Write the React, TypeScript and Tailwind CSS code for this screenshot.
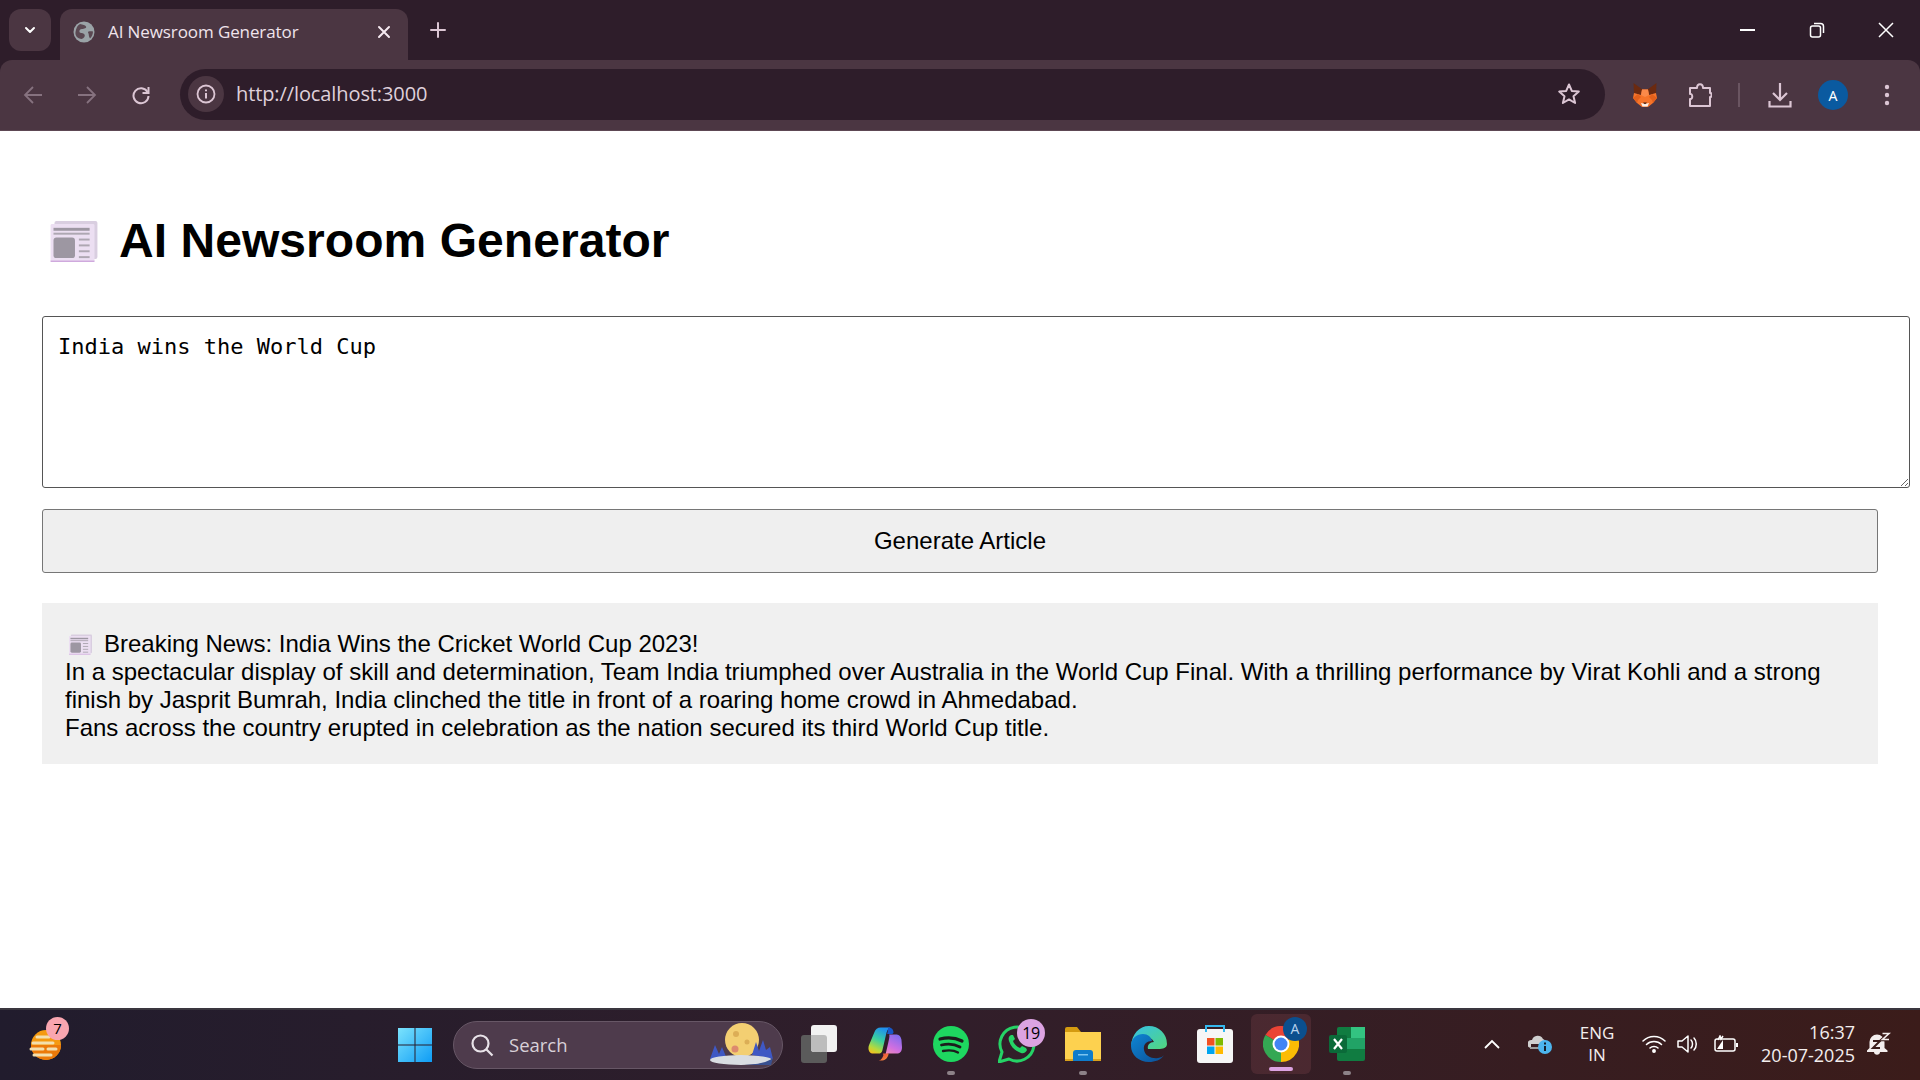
import React from "react";

const UI = "font-['Open_Sans','Noto_Sans',sans-serif]";
const ink = "#dcc6d4";
const dim = "#86727f";

function NewsEmoji({ className }: { className: string }) {
  return (
    <svg viewBox="0 0 48 42" className={className}>
      <rect x="4" y="0" width="44" height="39" rx="2" fill="#d9cee0" />
      <rect x="0" y="3" width="45" height="39" rx="1.5" fill="#ecdff2" />
      <rect x="0" y="40.5" width="45" height="1.5" fill="#cfa9dd" />
      <rect x="3" y="7" width="37" height="3" fill="#9d97a2" />
      <rect x="3" y="12" width="37" height="2" fill="#aea7b2" />
      <rect x="3" y="17" width="22" height="21" rx="3" fill="#9d97a2" />
      <rect x="29" y="18" width="11" height="2" fill="#aea7b2" />
      <rect x="29" y="24" width="11" height="2" fill="#aea7b2" />
      <rect x="29" y="30" width="11" height="2" fill="#aea7b2" />
      <rect x="29" y="36" width="11" height="2" fill="#aea7b2" />
    </svg>
  );
}

function Box({ w, children }: { w: string; children?: React.ReactNode }) {
  return <div className={`${w} h-full flex items-center justify-center shrink-0`}>{children}</div>;
}

function TabBar() {
  return (
    <div className="h-[60px] bg-[#2e1d2a] flex items-end shrink-0">
      <div className="w-[9px]" />
      <div className="w-[42px] h-[42px] mb-[9px] rounded-[12px] bg-[#4b3642] flex items-center justify-center">
        <svg viewBox="0 0 16 16" className="w-[16px] h-[16px]" fill="none" stroke="#fff" strokeWidth="2" strokeLinecap="round" strokeLinejoin="round"><path d="M4 6l4 4 4-4" /></svg>
      </div>
      <div className="w-[9px]" />
      <div className={`w-[348px] h-[51px] bg-[#4b3642] rounded-t-[12px] flex items-center pb-[6px] ${UI}`}>
        <div className="w-[48px] flex justify-center">
          <svg viewBox="0 0 22 22" className="w-[22px] h-[22px]">
            <circle cx="11" cy="11" r="10.500" fill="#9aa3a7" />
            <path d="M7 3c3 1 5 1 6 2.500s-2 2.500-4 2.500-3 1.500-2.500 3 4 .5 5 2.500-1 3.500-2.500 4.500C4 17.500 2 14.500 2.500 11S4.500 4 7 3zM15.500 10.500c1.500-.5 3-.5 4.500 0 0 2.500-1 5-3 7-1.500-2-1-4-1.500-5s-.8-1.500 0-2z" fill="#5a4852" />
          </svg>
        </div>
        <span className="text-[17px] text-[#f0e4ec] w-[269px] whitespace-nowrap leading-none tracking-[-0.100px]">AI Newsroom Generator</span>
        <svg viewBox="0 0 14 14" className="w-[14px] h-[14px]" fill="none" stroke="#f5e9f0" strokeWidth="2" strokeLinecap="round"><path d="M2 2l10 10M12 2L2 12" /></svg>
      </div>
      <div className="w-[22px]" />
      <div className="h-full flex items-center">
        <svg viewBox="0 0 16 16" className="w-[16px] h-[16px]" fill="none" stroke={ink} strokeWidth="2" strokeLinecap="round"><path d="M8 1v14M1 8h14" /></svg>
      </div>
      <div className="flex-1" />
      <div className="h-full flex items-center">
        <Box w="w-[69px]"><div className="w-[15px] h-[2px] bg-white" /></Box>
        <Box w="w-[69px]">
          <svg viewBox="0 0 16 16" className="w-[16px] h-[16px]" fill="none" stroke="#fff" strokeWidth="1.500"><rect x="1.500" y="4" width="10" height="11" rx="2" /><path d="M5 1.500h6.500a3 3 0 0 1 3 3V11" /></svg>
        </Box>
        <Box w="w-[69px]">
          <svg viewBox="0 0 16 16" className="w-[16px] h-[16px]" fill="none" stroke="#fff" strokeWidth="1.500"><path d="M1 1l14 14M15 1L1 15" /></svg>
        </Box>
      </div>
    </div>
  );
}

function Fox() {
  return (
    <svg viewBox="0 0 24 24" className="w-[24px] h-[24px]">
      <path d="M0.500 0l9 6.500-2 5.500L1 10z" fill="#6b2a10" />
      <path d="M23.500 0l-9 6.500 2 5.500L23 10z" fill="#6b2a10" />
      <path d="M1 10l7 2 1-5.500h6l1 5.500 7-2 1 5-4 5-5 4H9l-5-4-4-5z" fill="#f6742a" />
      <path d="M9 6.500h6l1 5.500-4 2-4-2z" fill="#fb8a4a" />
      <path d="M0 15l5-4 3 3-3 3-1 3zM24 15l-5-4-3 3 3 3 1 3z" fill="#e2601c" />
      <path d="M8 20l4 1 4-1-1.500 3.500h-5z" fill="#f7f2ec" />
      <path d="M10 19.500h4l-2 1.800z" fill="#3a2018" />
    </svg>
  );
}

function Toolbar() {
  return (
    <div className="bg-[#2e1d2a] shrink-0">
      <div className={`h-[71px] bg-[#4b3642] rounded-t-[12px] border-b border-[#5d4753] flex items-center ${UI}`}>
        <div className="w-[9px]" />
        <Box w="w-[48px]">
          <svg viewBox="0 0 20 20" className="w-[20px] h-[20px]" fill="none" stroke={dim} strokeWidth="1.800"><path d="M19 10H2M10 2l-8 8 8 8" /></svg>
        </Box>
        <div className="w-[6px]" />
        <Box w="w-[48px]">
          <svg viewBox="0 0 20 20" className="w-[20px] h-[20px]" fill="none" stroke={dim} strokeWidth="1.800"><path d="M1 10h17M10 2l8 8-8 8" /></svg>
        </Box>
        <div className="w-[6px]" />
        <Box w="w-[48px]">
          <svg viewBox="0 0 20 20" className="w-[20px] h-[20px]" fill="none" stroke={ink} strokeWidth="2"><path d="M16.500 7A7.500 7.500 0 1 0 17.500 11" /><path d="M17.500 2v6h-6" fill="none" /></svg>
        </Box>
        <div className="w-[15px]" />
        <div className="w-[1425px] h-[51px] bg-[#2e1d2a] rounded-full flex items-center shrink-0 pl-[8px] mt-[-2px]">
          <div className="w-[36px] h-[36px] rounded-full bg-[#4b3642] flex items-center justify-center shrink-0">
            <svg viewBox="0 0 20 20" className="w-[20px] h-[20px]" fill="none" stroke={ink} strokeWidth="1.800"><circle cx="10" cy="10" r="8.500" /><path d="M10 9v5.500M10 5.500v1.800" strokeWidth="2" /></svg>
          </div>
          <span className="ml-[12px] text-[20px] tracking-[-0.100px] text-[#dfd0da] leading-none">http://localhost:3000</span>
          <div className="flex-1" />
          <svg viewBox="0 0 24 24" className="w-[24px] h-[24px] mr-[24px]" fill="none" stroke={ink} strokeWidth="2" strokeLinejoin="round"><path d="M12 2.500l2.800 6.400 7 .7-5.300 4.600 1.600 6.800-6.100-3.600-6.100 3.600 1.600-6.800L2.200 9.600l7-.7z" /></svg>
        </div>
        <div className="w-[28px] shrink-0" />
        <Fox />
        <div className="w-[31px]" />
        <svg viewBox="0 0 24 26" className="w-[24px] h-[26px]" fill="none" stroke={ink} strokeWidth="2" strokeLinejoin="round"><path d="M2 6h7c0-5 6-5 6 0h7v5c2-1 2 5 0 4v9H2v-7c3 1 3-6 0-5z" /></svg>
        <div className="w-[26px]" />
        <div className="w-[2px] h-[24px] bg-[#6a5561]" />
        <div className="w-[28px]" />
        <svg viewBox="0 0 24 26" className="w-[24px] h-[26px]" fill="none" stroke={ink} strokeWidth="2.200"><path d="M12 1v17M5 11l7 7 7-7M1.500 19v5.500h21V19" /></svg>
        <div className="w-[26px]" />
        <div className="w-[30px] h-[30px] rounded-full bg-[#0a5aa0] flex items-center justify-center text-[14px] text-white font-['Noto_Sans',sans-serif] shrink-0">A</div>
        <div className="w-[36px]" />
        <svg viewBox="0 0 6 24" className="w-[6px] h-[24px]" fill={ink}><circle cx="3" cy="4" r="2.200" /><circle cx="3" cy="12" r="2.200" /><circle cx="3" cy="20" r="2.200" /></svg>
      </div>
    </div>
  );
}

function Page() {
  return (
    <main className="flex-1 min-h-0 overflow-hidden bg-white pl-[42px] pr-[42px] font-['Liberation_Sans',sans-serif] text-black">
      <h1 className="mt-[85px] h-[50px] flex items-center text-[48px] font-bold leading-none whitespace-nowrap tracking-[0.050px]">
        <NewsEmoji className="w-[48px] h-[41px] ml-[8px] mr-[21px] mt-[1px]" />
        <span>AI Newsroom Generator</span>
      </h1>
      <div className="h-[50px]" />
      <textarea
        readOnly
        defaultValue="India wins the World Cup"
        className="block w-[1868px] h-[172px] border border-[#555] rounded-[3px] pt-[15px] px-[15px] text-[22px] leading-[30px] font-['DejaVu_Sans_Mono',monospace] text-black bg-white outline-none"
      />
      <button className="block mt-[21px] w-full h-[64px] bg-[#efefef] border border-[#767676] rounded-[3px] text-[24px] text-black">Generate Article</button>
      <div className="mt-[30px] bg-[#f0f0f0] pt-[27px] pb-[22px] pl-[23px] pr-[23px] text-[24px] leading-[28px]">
        <div className="flex items-center">
          <NewsEmoji className="w-[23px] h-[21px] ml-[4px] mr-[12px] mt-[1px]" />
          <span>Breaking News: India Wins the Cricket World Cup 2023!</span>
        </div>
        <div>In a spectacular display of skill and determination, Team India triumphed over Australia in the World Cup Final. With a thrilling performance by Virat Kohli and a strong finish by Jasprit Bumrah, India clinched the title in front of a roaring home crowd in Ahmedabad.</div>
        <div>Fans across the country erupted in celebration as the nation secured its third World Cup title.</div>
      </div>
    </main>
  );
}

function Pip({ c = "bg-[#8d8288]", w = "w-[8px]" }: { c?: string; w?: string }) {
  return <div className={`absolute bottom-[3px] left-1/2 -translate-x-1/2 h-[4px] rounded-full ${c} ${w}`} />;
}

function Taskbar() {
  return (
    <div className={`h-[72px] shrink-0 border-t-2 border-[#3a363f] bg-linear-to-r from-[#211c2d] via-[#311e2a] to-[#3b1c1a] flex items-center ${UI}`}>
      <div className="w-[16px]" />
      <div className="relative w-[60px] h-full flex items-center justify-center">
        <svg viewBox="0 0 34 34" className="w-[34px] h-[34px]">
          <circle cx="17" cy="17" r="15" fill="#f59a10" />
          <path d="M17 32a15 15 0 0 0 15-15H2a15 15 0 0 0 15 15z" fill="#ec7a0a" />
          <g fill="none" stroke="#f3dfae" strokeWidth="3" strokeLinecap="round"><path d="M8 9h12M4 15h20M2 21h12M19 21h8M5 27h17" /></g>
        </svg>
        <div className="absolute left-[30px] top-[7px] w-[23px] h-[23px] rounded-full bg-[#f9a6b0] text-[15px] leading-[23px] text-center text-black">7</div>
      </div>
      <div className="w-[306px]" />
      <Box w="w-[66px]">
        <svg viewBox="0 0 36 36" className="w-[36px] h-[36px]">
          <defs><linearGradient id="w" x1="0" y1="0" x2="1" y2="1"><stop offset="0" stopColor="#7be3fd" /><stop offset="1" stopColor="#0e9cf5" /></linearGradient></defs>
          <path d="M1 1h16.500v16.500H1zM18.500 1H35v16.500H18.500zM1 18.500h16.500V35H1zM18.500 18.500H35V35H18.500z" fill="url(#w)" />
        </svg>
      </Box>
      <div className="w-[5px]" />
      <div className="relative w-[330px] h-[48px] rounded-full bg-[#4e3b4c] border border-[#675766] flex items-center shrink-0 mt-[-1px]">
        <svg viewBox="0 0 24 24" className="ml-[16px] w-[24px] h-[24px]" fill="none" stroke="#e8e2e8" strokeWidth="2.200"><circle cx="10.500" cy="10.500" r="8" /><path d="M16.500 16.500l6 6" /></svg>
        <span className="ml-[15px] text-[18.500px] text-[#d8d0d8]">Search</span>
        <svg viewBox="0 0 66 46" className="absolute right-[7px] top-[0px] w-[66px] h-[46px]">
          <circle cx="33" cy="18" r="17" fill="#f3cf72" />
          <circle cx="27" cy="12" r="3" fill="#dcae56" /><circle cx="38" cy="20" r="2.500" fill="#dcae56" /><circle cx="26" cy="27" r="3.500" fill="#dd8a6e" />
          <path d="M1 37l5-14 4 9 3-7 5 12zM43 33l4-13 3 9 4-11 3 10 4-3 3 12z" fill="#3f58c4" />
          <ellipse cx="32" cy="38" rx="31" ry="5" fill="#d9dde2" />
          <path d="M28 43c14 0 28-1 36-7l-2 7z" fill="#39508f" />
        </svg>
      </div>
      <div className="w-[3px]" />
      <div className="h-full flex items-center pb-[2px]">
        <Box w="w-[66px]">
          <svg viewBox="0 0 36 38" className="w-[36px] h-[38px]">
            <rect x="0" y="10" width="26" height="28" rx="3" fill="#5b5b5b" />
            <rect x="10" y="0" width="26" height="27" rx="3" fill="#f2f2f2" />
            <path d="M10 10h13a3 3 0 0 1 3 3v14H13a3 3 0 0 1-3-3z" fill="#bdbdbd" />
          </svg>
        </Box>
        <Box w="w-[66px]">
          <svg viewBox="0 0 32 32" className="w-[34px] h-[34px]">
            <defs>
              <linearGradient id="c1" x1="0.6" y1="0" x2="0.2" y2="1"><stop offset="0" stopColor="#1f8ff0" /><stop offset=".45" stopColor="#39d0a0" /><stop offset=".8" stopColor="#b6d93c" /><stop offset="1" stopColor="#f5c01e" /></linearGradient>
              <linearGradient id="c2" x1="0.7" y1="0" x2="0.3" y2="1"><stop offset="0" stopColor="#7f6cf0" /><stop offset=".6" stopColor="#d06fe0" /><stop offset="1" stopColor="#f58fb0" /></linearGradient>
              <linearGradient id="c3" x1="0" y1="0" x2="1" y2="1"><stop offset="0" stopColor="#e83a3a" /><stop offset="1" stopColor="#f79a3a" /></linearGradient>
            </defs>
            <path d="M19 .5h-7c-3 0-5 1.500-6 4.500L1 17c-1.500 4 0 8 4 8h5c1.500 0 3-1 3.500-3L17 7c.7-3 1.500-5.500 4-6.500z" fill="url(#c1)" />
            <path d="M19 .5c3 0 5 1.500 5 5l-1 1h-5l.7-3c.2-1.500.3-2.500.3-3z" fill="#1757c9" />
            <path d="M20 7h7c2.500 0 4 2 4.500 5l.5 7c0 4-2 6-5 6h-7.500c-1.500 0-3 2-3.500 3l3-13c.8-4 1.500-6 1-8z" fill="url(#c2)" />
            <path d="M10.500 25h8.500c1.500 0 .5 0 .5 0-.5 3-2.500 6.500-6 6.500H10c2.500-.5 3.500-2.500 4.500-5l-.5-1.500z" fill="url(#c3)" />
          </svg>
        </Box>
        <div className="relative w-[66px] h-full flex items-center justify-center">
          <svg viewBox="0 0 36 36" className="w-[36px] h-[36px]">
            <circle cx="18" cy="18" r="18" fill="#1ed760" />
            <g fill="none" stroke="#1c1c1c" strokeLinecap="round"><path d="M7 13c8-2 15-1.500 22 2" strokeWidth="3.200" /><path d="M8.500 19c6.500-1.500 13-1 18.500 2" strokeWidth="2.800" /><path d="M10 25c5.500-1 11-.8 15 1.500" strokeWidth="2.300" /></g>
          </svg>
          <Pip />
        </div>
        <div className="relative w-[66px] h-full flex items-center justify-center">
          <svg viewBox="0 0 38 38" className="w-[38px] h-[38px]">
            <path d="M1 37l3-10A17 17 0 1 1 11 34z" fill="none" stroke="#25d366" strokeWidth="3" strokeLinejoin="round" />
            <path d="M13 10c-2 1-3 3-2 6 2 6 6 10 12 12 3 1 5-1 6-3l-1-2-4-2-2 2c-3-1-6-4-7-7l2-2-2-4z" fill="#25d366" />
          </svg>
          <div className="absolute left-[33px] top-[9px] w-[28px] h-[28px] rounded-full bg-[#dca3e2] text-[16px] leading-[28px] text-center text-black tracking-[-0.500px]">19</div>
        </div>
        <div className="relative w-[66px] h-full flex items-center justify-center">
          <svg viewBox="0 0 36 34" className="w-[36px] h-[34px]">
            <path d="M0 2a2 2 0 0 1 2-2h10l4 5h20v6H0z" fill="#d49b10" />
            <path d="M0 5h36v29H0z" fill="#fdd14f" />
            <rect x="0" y="32" width="36" height="2" fill="#d9a11c" />
            <path d="M8 26a3 3 0 0 1 3-3h14a3 3 0 0 1 3 3v8H8z" fill="#0f7ccb" />
            <rect x="13" y="27" width="10" height="1.500" fill="#7cc4f0" />
          </svg>
          <Pip />
        </div>
        <Box w="w-[66px]">
          <svg viewBox="0 0 36 36" className="w-[36px] h-[36px]">
            <defs>
              <linearGradient id="e1" x1="0" y1="0" x2="1" y2="1"><stop offset="0" stopColor="#36c1e8" /><stop offset="1" stopColor="#52d67c" /></linearGradient>
              <linearGradient id="e2" x1="0" y1="0" x2="1" y2="1"><stop offset="0" stopColor="#0e86d4" /><stop offset="1" stopColor="#0c4f96" /></linearGradient>
            </defs>
            <path d="M18 0a18 18 0 0 1 18 18c0 4-4 5-9 5H17c-1-4 2-7 6-7-2-4-6-6-11-5-5 1-10 4-12 9C1 8 8 0 18 0z" fill="url(#e1)" />
            <path d="M0 20C0 12 6 8 12 8c5 0 8 3 9 7-5 0-9 3-8 9 1 6 8 9 14 8 3-.5 5-1.500 6-3-3 5-9 7-15 7C8 36 0 29 0 20z" fill="url(#e2)" />
          </svg>
        </Box>
        <Box w="w-[66px]">
          <svg viewBox="0 0 36 38" className="w-[36px] h-[38px]">
            <rect x="0" y="4" width="36" height="34" rx="3" fill="#f6f6f6" />
            <path d="M9 7V1h18v6" fill="none" stroke="#35b8ee" strokeWidth="2" />
            <rect x="10" y="13" width="7.500" height="7.500" fill="#f25022" />
            <rect x="18.500" y="13" width="7.500" height="7.500" fill="#7fba00" />
            <rect x="10" y="21.500" width="7.500" height="7.500" fill="#00a4ef" />
            <rect x="18.500" y="21.500" width="7.500" height="7.500" fill="#ffb900" />
          </svg>
        </Box>
        <div className="relative w-[60px] h-[60px] mx-[3px] rounded-[6px] bg-[#5a3138]/60 flex items-center justify-center">
          <svg viewBox="0 0 36 36" className="w-[36px] h-[36px]">
            <path d="M18 18L2.400 9A18 18 0 0 1 33.600 9z" fill="#ea4335" />
            <path d="M18 18L33.600 9A18 18 0 0 1 18 36z" fill="#fbbc05" />
            <path d="M18 18V36A18 18 0 0 1 2.400 9z" fill="#34a853" />
            <circle cx="18" cy="18" r="8.500" fill="#fff" />
            <circle cx="18" cy="18" r="6.500" fill="#4285f4" />
          </svg>
          <div className="absolute left-[32px] top-[3px] w-[24px] h-[24px] rounded-full bg-[#0b4f8e] text-[14px] leading-[24px] text-center text-[#b9d4ee]">A</div>
          <Pip c="bg-[#dca3e2]" w="w-[24px]" />
        </div>
        <div className="relative w-[66px] h-full flex items-center justify-center">
          <svg viewBox="0 0 36 36" className="w-[36px] h-[36px]">
            <rect x="8" y="1" width="28" height="34" rx="2" fill="#107c41" />
            <rect x="22" y="1" width="14" height="11" fill="#33c481" />
            <rect x="8" y="12" width="14" height="11" fill="#21a366" />
            <rect x="22" y="12" width="14" height="11" fill="#21a366" />
            <rect x="0" y="9" width="18" height="18" rx="2" fill="#0b6a39" />
            <path d="M5 13l8 10M13 13l-8 10" stroke="#fff" strokeWidth="2.200" />
          </svg>
          <Pip />
        </div>
      </div>
      <div className="flex-1" />
      <div className="h-full flex items-center text-white pr-[29px] pb-[2px]">
        <svg viewBox="0 0 16 10" className="w-[16px] h-[10px] mr-[28px]" fill="none" stroke="#fff" strokeWidth="1.800"><path d="M1 9l7-7 7 7" /></svg>
        <svg viewBox="0 0 24 20" className="w-[24px] h-[20px] mr-[20px]">
          <path d="M3 14a4 4 0 0 1 1-8 6 6 0 0 1 11-1 5 5 0 0 1 3 5H3z" fill="#cfcfcf" />
          <path d="M2 15h14v-2H2z" fill="#9c9c9c" />
          <circle cx="17" cy="13" r="7" fill="#4cb5ee" />
          <rect x="16" y="12" width="2" height="5" fill="#14202c" /><rect x="16" y="8.500" width="2" height="2" fill="#14202c" />
        </svg>
        <div className="w-[50px] text-center text-[17px] leading-[22px] text-[#f4eeee]">ENG<br />IN</div>
        <svg viewBox="0 0 24 18" className="w-[24px] h-[18px] ml-[20px]" fill="none" stroke="#fff" strokeWidth="1.500" strokeLinecap="round"><path d="M1 6c6-6 16-6 22 0M4.500 9.500c4-4 11-4 15 0M8 13c2-2 6-2 8 0" /><circle cx="12" cy="16" r="1.200" fill="#fff" /></svg>
        <svg viewBox="0 0 24 18" className="w-[24px] h-[18px] ml-[11px]" fill="none" stroke="#fff" strokeWidth="1.500" strokeLinejoin="round"><path d="M1 6h4l6-5v16l-6-5H1z" /><path d="M14 5c2 2 2 6 0 8M17 3c3 3 3 9 0 12" strokeLinecap="round" /></svg>
        <svg viewBox="0 0 24 18" className="w-[24px] h-[18px] ml-[13px]" fill="none" stroke="#fff" strokeWidth="1.500"><rect x="1" y="4" width="20" height="12" rx="2" /><path d="M23 8v4" strokeWidth="2" /><path d="M3 14L9 5v9z" fill="#fff" stroke="none" /><path d="M4 5l2-4 1 3 2-3" /></svg>
        <div className="w-[112px] text-right text-[18px] leading-[23px] text-[#f4eeee] ml-[5px]">16:37<br />20-07-2025</div>
        <svg viewBox="0 0 24 24" className="w-[24px] h-[24px] ml-[12px]" fill="none">
          <path d="M10 2.500a7.500 7.500 0 0 1 7.500 7.500v6l3 2.500V20H0v-1.500L2.500 16v-6A7.500 7.500 0 0 1 10 2.500z" fill="#f4eeee" />
          <path d="M7 20h6c0 3.500-6 3.500-6 0z" fill="#f4eeee" />
          <path d="M6 9h7l-7 7h7" stroke="#3b1c1a" strokeWidth="2" />
          <path d="M15.500 1.500H22l-6.500 6H22" stroke="#3b1c1a" strokeWidth="3.500" />
          <path d="M15.500 1.500H22l-6.500 6H22" stroke="#f4eeee" strokeWidth="1.600" />
        </svg>
      </div>
    </div>
  );
}

export default function App() {
  return (
    <div className="w-[1920px] h-[1080px] overflow-hidden flex flex-col bg-white">
      <TabBar />
      <Toolbar />
      <Page />
      <Taskbar />
    </div>
  );
}
